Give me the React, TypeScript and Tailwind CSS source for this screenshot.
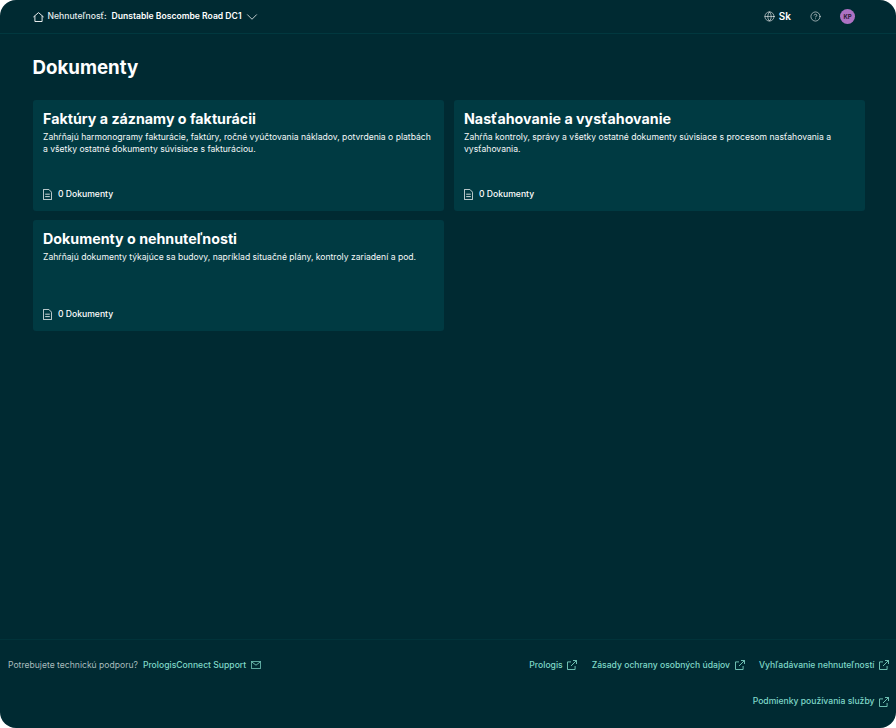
import { ChevronDown, Globe, CircleHelp } from "lucide-react";

const cards = [
  {
    title: "Faktúry a záznamy o fakturácii",
    text: "Zahŕňajú harmonogramy fakturácie, faktúry, ročné vyúčtovania nákladov, potvrdenia o platbách a všetky ostatné dokumenty súvisiace s fakturáciou.",
  },
  {
    title: "Nasťahovanie a vysťahovanie",
    text: "Zahŕňa kontroly, správy a všetky ostatné dokumenty súvisiace s procesom nasťahovania a vysťahovania.",
  },
  {
    title: "Dokumenty o nehnuteľnosti",
    text: "Zahŕňajú dokumenty týkajúce sa budovy, napríklad situačné plány, kontroly zariadení a pod.",
  },
];

function HomeIcon() {
  return (
    <svg width="11" height="10" viewBox="0 0 11 10" fill="none" stroke="currentColor" strokeWidth="0.9">
      <path d="M.4 5 5.5.6 10.6 5" />
      <path d="M1.9 3.9v5.6h7.2V3.9" />
    </svg>
  );
}

function MailIcon() {
  return (
    <svg width="10" height="8" viewBox="0 0 10 8" fill="none" stroke="currentColor" strokeWidth="0.8">
      <path d="M.4.4h9.2v7.2H.4z" />
      <path d="M.4.6 5 4.2 9.6.6" />
    </svg>
  );
}

function ExternalIcon() {
  return (
    <svg width="10" height="10" viewBox="0 0 10 10" fill="none" stroke="currentColor" strokeWidth="0.85">
      <path d="M4 1.9H.5v7.6h7.6V6" />
      <path d="M6 .5h3.5V4M9.5.5 4 6" />
    </svg>
  );
}

function DocIcon() {
  return (
    <svg width="9" height="11" viewBox="0 0 9 11" fill="none" stroke="currentColor" strokeWidth="0.8">
      <path d="M.4.4h5.4l2.8 2.8v7.4H.4z" />
      <path d="M2.2 5.2h4.6M2.2 7.6h4.6" />
    </svg>
  );
}

function FooterLink({ label }: { label: string }) {
  return (
    <a className="flex items-center gap-[4.5px] text-[#7fd8c8]">
      <span>{label}</span>
      <ExternalIcon />
    </a>
  );
}

export default function App() {
  return (
    <div className="h-[728px] w-[896px] bg-white font-['Inter',sans-serif]">
      <div className="flex h-full flex-col overflow-hidden rounded-2xl bg-[#002a32] text-white">
        {/* Header */}
        <header className="flex h-[34px] shrink-0 items-center justify-between border-b border-[#01383f] pl-[32.5px] pr-[41px]">
          <div className="flex items-center text-[8.6px] font-medium">
            <HomeIcon />
            <span className="ml-[4px] text-[#e6eded]">Nehnuteľnosť:</span>
            <span className="ml-[5px] font-semibold">Dunstable Boscombe Road DC1</span>
            <ChevronDown size={18} strokeWidth={1} className="ml-[1px] -mr-[4px]" />
          </div>
          <div className="flex items-center">
            <Globe size={11} strokeWidth={1.25} />
            <span className="ml-[4px] text-[10px] font-semibold">Sk</span>
            <CircleHelp size={11} strokeWidth={1.25} className="ml-[19px]" />
            <span className="ml-[19px] flex h-[15px] w-[15px] items-center justify-center rounded-full bg-[#ad72c4] text-[6px] font-bold text-[#2a1a35]">
              KP
            </span>
          </div>
        </header>

        {/* Main */}
        <main className="flex-1 pl-[32.5px] pr-[31px] pt-[21px]">
          <h1 className="text-[18.7px] leading-[26px] font-bold">Dokumenty</h1>
          <div className="mt-[19px] grid grid-cols-2 gap-x-[9.5px] gap-y-[9.5px]">
            {cards.map((c) => (
              <div key={c.title} className="flex h-[110.5px] flex-col rounded-[3px] bg-[#003a42] px-[10.5px] pt-[9px]">
                <h2 className="text-[14.25px] leading-[19px] font-bold">{c.title}</h2>
                <p className="mt-[2.5px] text-[8.6px] leading-[12.5px] text-[#f6f9f9]">{c.text}</p>
                <div className="mt-auto mb-[10px] flex items-center gap-[6px] text-[8.6px] font-medium">
                  <DocIcon />
                  <span>0 Dokumenty</span>
                </div>
              </div>
            ))}
          </div>
        </main>

        {/* Footer */}
        <footer className="flex h-[89px] shrink-0 items-start justify-between border-t border-[#01333a] pl-[8px] pr-[7px] pt-[19px] text-[8.6px]">
          <div className="flex items-center">
            <span className="text-[#a9bcbd]">Potrebujete technickú podporu?</span>
            <span className="ml-[5px] font-medium text-[#7fd8c8]">PrologisConnect Support</span>
            <span className="ml-[5px] text-[#7fd8c8]">
              <MailIcon />
            </span>
          </div>
          <div className="flex w-[380px] flex-wrap justify-end gap-x-[14.5px] gap-y-[23.5px] font-medium">
            <FooterLink label="Prologis" />
            <FooterLink label="Zásady ochrany osobných údajov" />
            <FooterLink label="Vyhľadávanie nehnuteľností" />
            <FooterLink label="Podmienky používania služby" />
          </div>
        </footer>
      </div>
    </div>
  );
}
